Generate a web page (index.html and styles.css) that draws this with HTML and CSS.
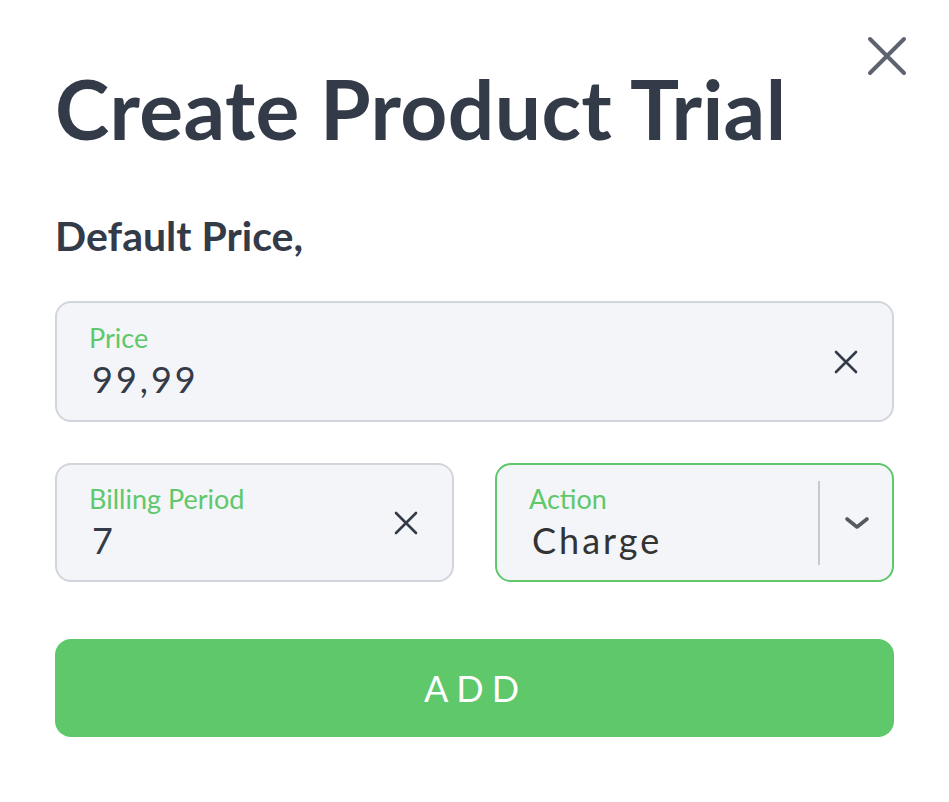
FILE: index.html
```html
<!DOCTYPE html>
<html lang="en">
<head>
<meta charset="utf-8">
<title>Create Product Trial</title>
<link rel="stylesheet" href="styles.css">
</head>
<body>
<div class="modal">
  <button class="close" aria-label="Close">
    <svg viewBox="0 0 40 40" width="40" height="40"><path d="M3 3 L37 37 M37 3 L3 37" stroke="#5f636f" stroke-width="4" stroke-linecap="round" fill="none"/></svg>
  </button>
  <h1 class="title">Create Product Trial</h1>
  <h2 class="subtitle">Default Price,</h2>
  <div class="field">
    <div class="field-body">
      <div class="label">Price</div>
      <div class="value">99,99</div>
    </div>
    <span class="clear">
      <svg viewBox="0 0 24 24" width="24" height="24"><path d="M2 2 L22 22 M22 2 L2 22" stroke="#333a48" stroke-width="2.6" stroke-linecap="round" fill="none"/></svg>
    </span>
  </div>
  <div class="row">
    <div class="field field-small">
      <div class="field-body">
        <div class="label">Billing Period</div>
        <div class="value">7</div>
      </div>
      <span class="clear">
        <svg viewBox="0 0 24 24" width="24" height="24"><path d="M2 2 L22 22 M22 2 L2 22" stroke="#333a48" stroke-width="2.6" stroke-linecap="round" fill="none"/></svg>
      </span>
    </div>
    <div class="field field-small field-active">
      <div class="field-body">
        <div class="label">Action</div>
        <div class="value value-select">Charge</div>
      </div>
      <span class="divider"></span>
      <span class="chevron">
        <svg viewBox="0 0 26 14" width="26" height="14"><path d="M3 3 L13 11 L23 3" stroke="#555a60" stroke-width="3.6" stroke-linecap="round" stroke-linejoin="round" fill="none"/></svg>
      </span>
    </div>
  </div>
  <button class="add">ADD</button>
</div>
</body>
</html>
```
FILE: styles.css
```css
html, body {
  margin: 0;
  padding: 0;
  background: #ffffff;
}
body {
  font-family: Lato, "Noto Sans", sans-serif;
  color: #333a48;
}
.modal {
  position: relative;
  padding: 62px 55px 0 55px;
}
.close {
  position: absolute;
  top: 36px;
  right: 42px;
  width: 40px;
  height: 40px;
  padding: 0;
  border: 0;
  background: none;
}
.close svg { display: block; }
.title {
  margin: 0;
  font-size: 82px;
  line-height: 92px;
  font-weight: 700;
  letter-spacing: 0.4px;
  color: #333a48;
}
.subtitle {
  margin: 57px 0 0 0;
  font-size: 41px;
  line-height: 50px;
  font-weight: 700;
  color: #333a48;
}
.field {
  margin-top: 40px;
  box-sizing: border-box;
  height: 121px;
  border: 2px solid #d3d5dc;
  border-radius: 16px;
  background: #f4f5f9;
  display: flex;
  align-items: center;
  padding: 0 34px 0 32px;
}
.field-body {
  flex: 1;
  display: flex;
  flex-direction: column;
}
.label {
  font-size: 27px;
  line-height: 32px;
  color: #5ec86b;
}
.value {
  margin-top: 3px;
  font-size: 36px;
  line-height: 44px;
  letter-spacing: 3px;
  padding-left: 3px;
  color: #333a48;
}
.clear svg, .chevron svg { display: block; }
.row {
  margin-top: 41px;
  display: grid;
  grid-template-columns: 1fr 1fr;
  gap: 41px;
}
.row .field {
  margin-top: 0;
  height: 119px;
  padding-right: 34px;
}
.field-active {
  border-color: #5ec86b;
  padding-right: 22px !important;
}
.divider {
  align-self: center;
  width: 2px;
  height: 84px;
  background: #c8c9cc;
  margin-right: 24px;
}
.value-select {
  color: #333333;
}
.add {
  display: block;
  width: 100%;
  margin-top: 57px;
  height: 98px;
  border: 0;
  border-radius: 16px;
  background: #5ec86b;
  color: #ffffff;
  font-family: Lato, "Noto Sans", sans-serif;
  font-size: 36px;
  font-weight: 400;
  letter-spacing: 8px;
  padding-left: 8px;
}
```
